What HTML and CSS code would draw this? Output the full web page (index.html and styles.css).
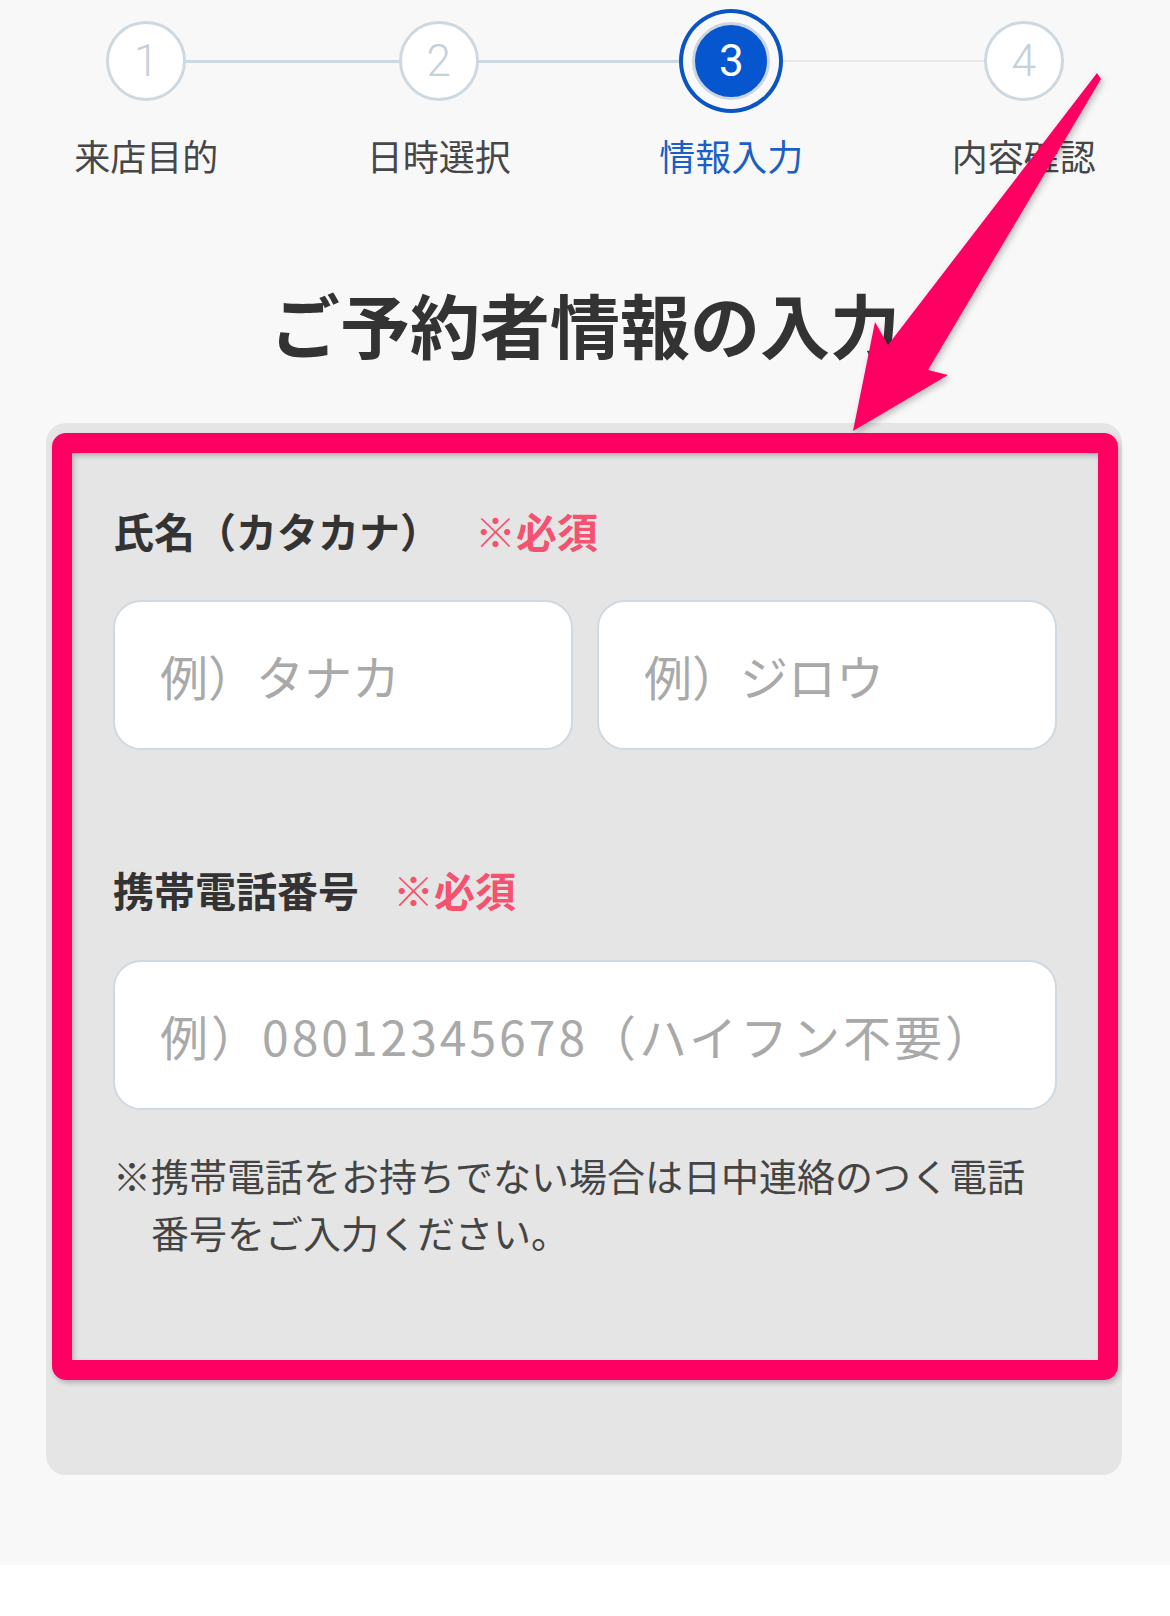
FILE: index.html
```html
<!DOCTYPE html>
<html lang="ja">
<head>
<meta charset="utf-8">
<title>ご予約者情報の入力</title>
<link rel="stylesheet" href="styles.css">
</head>
<body>
<div class="page">
  <ol class="stepper">
    <li class="step done"><span class="dot-wrap"><span class="dot">1</span></span><span class="step-label">来店目的</span></li>
    <li class="step done"><span class="dot-wrap"><span class="dot">2</span></span><span class="step-label">日時選択</span></li>
    <li class="step active"><span class="dot-wrap"><span class="dot">3</span></span><span class="step-label">情報入力</span></li>
    <li class="step"><span class="dot-wrap"><span class="dot">4</span></span><span class="step-label">内容確認</span></li>
  </ol>

  <h1 class="title">ご予約者情報の入力</h1>

  <section class="card">
    <div class="field">
      <div class="field-label">氏名（カタカナ）<span class="req">※必須</span></div>
      <div class="name-row">
        <input class="input" type="text" placeholder="例）タナカ">
        <input class="input" type="text" placeholder="例）ジロウ">
      </div>
    </div>

    <div class="field phone">
      <div class="field-label">携帯電話番号<span class="req">※必須</span></div>
      <input class="input input-tel" type="tel" placeholder="例）08012345678（ハイフン不要）">
      <p class="note">※携帯電話をお持ちでない場合は日中連絡のつく電話番号をご入力ください。</p>
    </div>

    <div class="highlight"></div>
  </section>

  <svg class="arrow" viewBox="0 0 1170 1616" aria-hidden="true">
    <polygon points="1097,73 1101,79 928,370 948,375 853,431 875,322 888,345" />
  </svg>
</div>
</body>
</html>
```
FILE: styles.css
```css
* { box-sizing: border-box; }

html, body {
  margin: 0;
  padding: 0;
  background: #ffffff;
}

body {
  font-family: "Noto Sans CJK JP", "Noto Sans", sans-serif;
  color: #333333;
}

.page {
  position: relative;
  height: 1565px;
  background: #f8f8f8;
  overflow: hidden;
}

/* ---------- stepper ---------- */
.stepper {
  list-style: none;
  margin: 0;
  padding: 8px 0 0;
  display: grid;
  grid-template-columns: repeat(4, 1fr);
}

.step {
  position: relative;
  display: flex;
  flex-direction: column;
  align-items: center;
}

.step:not(:last-child)::after {
  content: "";
  position: absolute;
  top: 52px;
  left: 50%;
  width: 100%;
  height: 3px;
  background: #cdd8e0;
  z-index: 1;
}

.step.active::after {
  background: #e3e8ec;
  height: 2px;
}

.dot-wrap {
  height: 106px;
  display: flex;
  align-items: center;
  justify-content: center;
}

.dot {
  position: relative;
  z-index: 2;
  width: 80px;
  height: 80px;
  border-radius: 50%;
  border: 3px solid #cdd8e0;
  background: #ffffff;
  color: #c4d0da;
  font-family: Roboto, "Liberation Sans", sans-serif;
  font-weight: 300;
  font-size: 44px;
  display: flex;
  align-items: center;
  justify-content: center;
}

.step.active .dot {
  width: 78px;
  height: 78px;
  background: #0656cf;
  border: 3px solid #cbd6e2;
  color: #ffffff;
  font-weight: 400;
  box-shadow: 0 0 0 9px #f9f9f9, 0 0 0 13px #0a54c4;
}

.step-label {
  margin-top: 16px;
  font-size: 36px;
  line-height: 50px;
  color: #474747;
}

.step.active .step-label {
  color: #1b5fc6;
}

/* ---------- title ---------- */
.title {
  margin: 99px 0 0;
  text-align: center;
  font-size: 70px;
  line-height: 90px;
  font-weight: 700;
  color: #333333;
}

/* ---------- card ---------- */
.card {
  position: relative;
  margin: 54px 0 0 46px;
  width: 1076px;
  padding: 77px 65px 215px 67px;
  background: #e5e5e5;
  border-radius: 20px;
}

.field-label {
  font-size: 41px;
  line-height: 60px;
  font-weight: 700;
  color: #333333;
}

.req {
  margin-left: 34px;
  color: #f4526f;
}

.name-row {
  margin-top: 40px;
  display: grid;
  grid-template-columns: 1fr 1fr;
  gap: 24px;
}

.input {
  display: block;
  width: 100%;
  height: 150px;
  margin: 0;
  padding: 0 0 0 45px;
  border: 2px solid #cfd9e1;
  border-radius: 28px;
  background: #ffffff;
  font-family: "Noto Sans CJK JP", "Noto Sans", sans-serif;
  font-size: 48px;
  color: #333333;
  outline: none;
}

.input::placeholder {
  color: #a9a9a9;
  opacity: 1;
}

.input-tel {
  letter-spacing: 3px;
}

.phone {
  margin-top: 109px;
}

.phone .input {
  margin-top: 41px;
}

.note {
  margin: 36px 0 0;
  padding-left: 1em;
  text-indent: -1em;
  font-size: 38px;
  line-height: 57px;
  color: #444444;
}

/* ---------- annotation overlay ---------- */
.highlight {
  position: absolute;
  left: 6px;
  top: 10px;
  right: 4px;
  bottom: 95px;
  border: 20px solid #ff0062;
  border-radius: 14px;
  box-shadow: 2px 3px 5px rgba(0, 0, 0, 0.22), inset 2px 3px 5px rgba(0, 0, 0, 0.22);
  pointer-events: none;
}

.arrow {
  position: absolute;
  left: 0;
  top: 0;
  width: 1170px;
  height: 1616px;
  pointer-events: none;
  fill: #ff0062;
  filter: drop-shadow(2px 3px 3px rgba(0, 0, 0, 0.25));
}
```
